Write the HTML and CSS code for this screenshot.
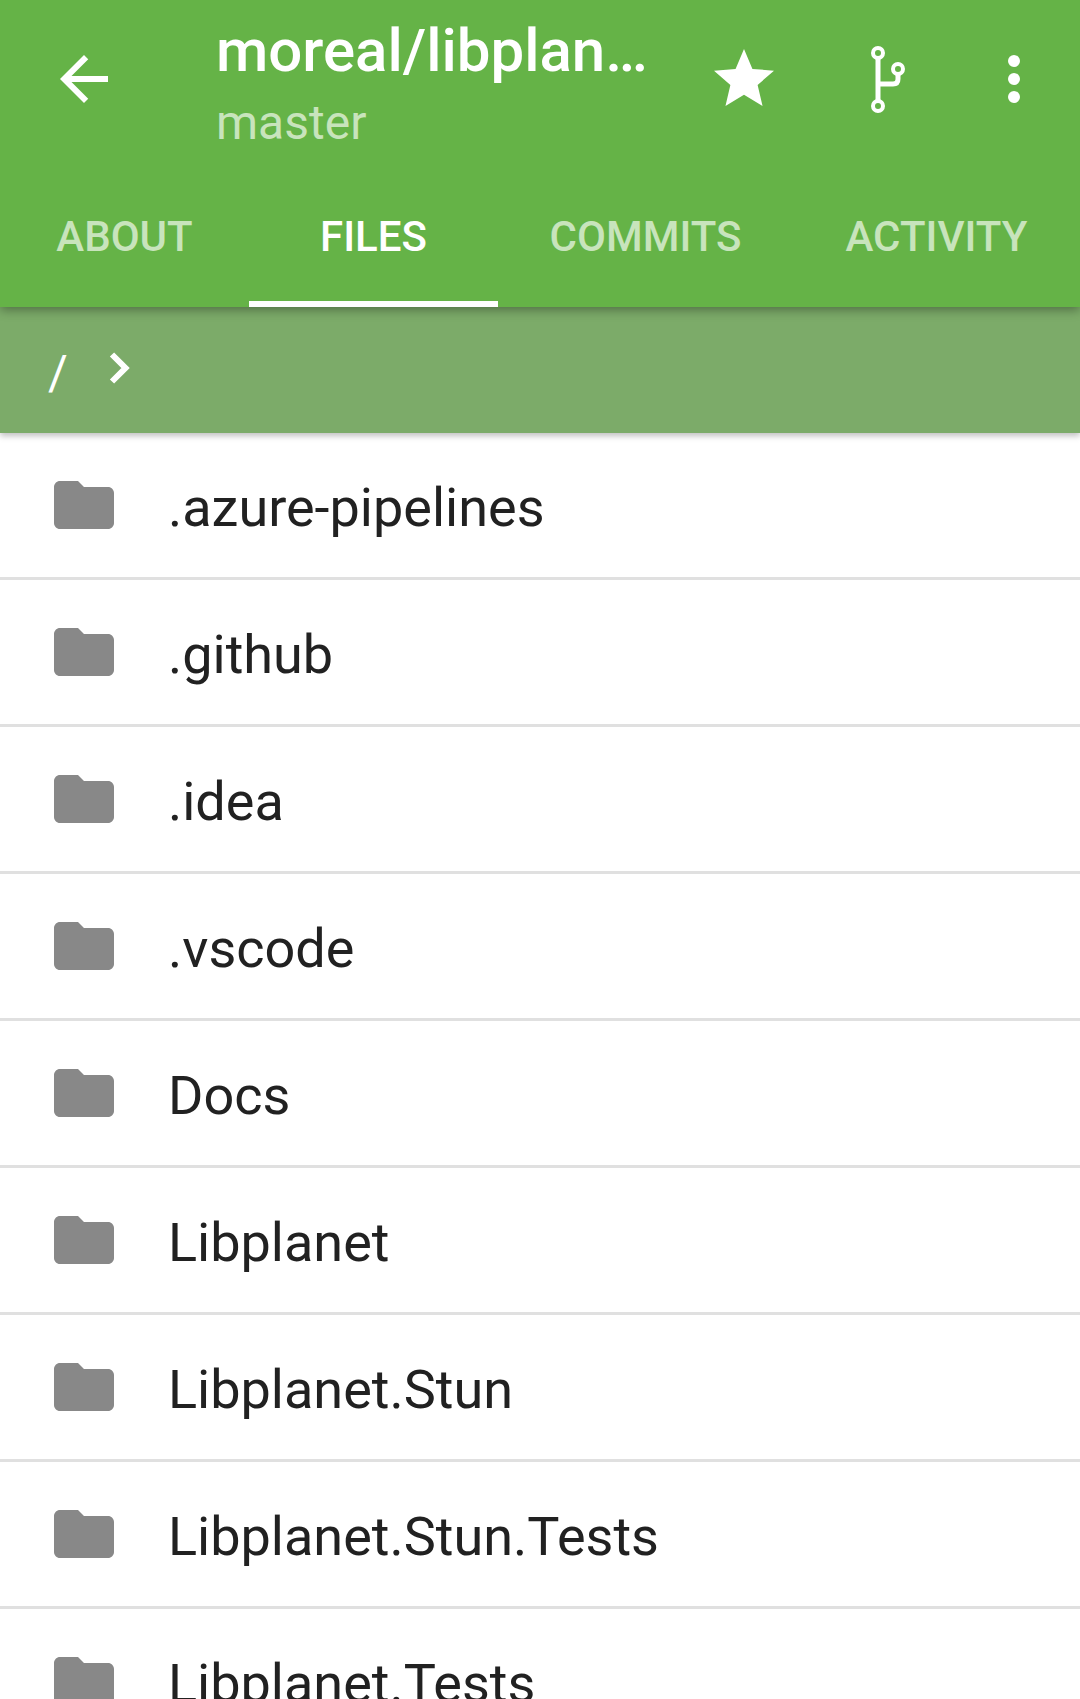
FILE: index.html
```html
<!DOCTYPE html>
<html lang="en">
<head>
<meta charset="utf-8">
<title>moreal/libplanet</title>
<link rel="stylesheet" href="styles.css">
</head>
<body>
<div class="app">
  <header class="appbar">
    <div class="toolbar">
      <svg class="icon back" viewBox="0 0 24 24"><path d="M20 11H7.83l5.59-5.59L12 4l-8 8 8 8 1.41-1.41L7.83 13H20v-2z"/></svg>
      <div class="titles">
        <div class="title">moreal/libplanet</div>
        <div class="subtitle">master</div>
      </div>
      <div class="actions">
        <svg class="icon star" viewBox="0 0 24 24"><path d="M12 17.27L18.18 21l-1.64-7.03L22 9.24l-7.19-.61L12 2 9.19 8.63 2 9.24l5.46 4.73L5.82 21z"/></svg>
        <svg class="icon branch" viewBox="0 0 72 72"><g fill="none" stroke="#fff" stroke-width="4"><circle cx="35" cy="10" r="5"/><circle cx="55" cy="26" r="5"/><circle cx="35" cy="63" r="5"/><path d="M35 15V58" stroke-width="5"/><path d="M35 41H50Q55 41 55 36V31" stroke-width="5"/></g></svg>
        <svg class="icon dots" viewBox="0 0 72 72"><circle cx="36" cy="18" r="6"/><circle cx="36" cy="36" r="6"/><circle cx="36" cy="54" r="6"/></svg>
      </div>
    </div>
    <nav class="tabs">
      <div class="tab">ABOUT</div>
      <div class="tab active">FILES</div>
      <div class="tab">COMMITS</div>
      <div class="tab">ACTIVITY</div>
    </nav>
  </header>
  <div class="crumbs">
    <span class="slash">/</span>
    <svg class="chev" viewBox="0 0 24 36"><path d="M5 2.500L18.500 16L5 29.500" fill="none" stroke="#fff" stroke-width="6"/></svg>
  </div>
  <ul class="files">
    <li class="file"><svg class="folder" viewBox="0 0 24 24"><path d="M10 4H4c-1.100 0-2 .9-2 2v12c0 1.100.9 2 2 2h16c1.100 0 2-.9 2-2V8c0-1.100-.9-2-2-2h-8l-2-2z"/></svg><span class="name">.azure-pipelines</span></li>
    <li class="file"><svg class="folder" viewBox="0 0 24 24"><path d="M10 4H4c-1.100 0-2 .9-2 2v12c0 1.100.9 2 2 2h16c1.100 0 2-.9 2-2V8c0-1.100-.9-2-2-2h-8l-2-2z"/></svg><span class="name">.github</span></li>
    <li class="file"><svg class="folder" viewBox="0 0 24 24"><path d="M10 4H4c-1.100 0-2 .9-2 2v12c0 1.100.9 2 2 2h16c1.100 0 2-.9 2-2V8c0-1.100-.9-2-2-2h-8l-2-2z"/></svg><span class="name">.idea</span></li>
    <li class="file"><svg class="folder" viewBox="0 0 24 24"><path d="M10 4H4c-1.100 0-2 .9-2 2v12c0 1.100.9 2 2 2h16c1.100 0 2-.9 2-2V8c0-1.100-.9-2-2-2h-8l-2-2z"/></svg><span class="name">.vscode</span></li>
    <li class="file"><svg class="folder" viewBox="0 0 24 24"><path d="M10 4H4c-1.100 0-2 .9-2 2v12c0 1.100.9 2 2 2h16c1.100 0 2-.9 2-2V8c0-1.100-.9-2-2-2h-8l-2-2z"/></svg><span class="name">Docs</span></li>
    <li class="file"><svg class="folder" viewBox="0 0 24 24"><path d="M10 4H4c-1.100 0-2 .9-2 2v12c0 1.100.9 2 2 2h16c1.100 0 2-.9 2-2V8c0-1.100-.9-2-2-2h-8l-2-2z"/></svg><span class="name">Libplanet</span></li>
    <li class="file"><svg class="folder" viewBox="0 0 24 24"><path d="M10 4H4c-1.100 0-2 .9-2 2v12c0 1.100.9 2 2 2h16c1.100 0 2-.9 2-2V8c0-1.100-.9-2-2-2h-8l-2-2z"/></svg><span class="name">Libplanet.Stun</span></li>
    <li class="file"><svg class="folder" viewBox="0 0 24 24"><path d="M10 4H4c-1.100 0-2 .9-2 2v12c0 1.100.9 2 2 2h16c1.100 0 2-.9 2-2V8c0-1.100-.9-2-2-2h-8l-2-2z"/></svg><span class="name">Libplanet.Stun.Tests</span></li>
    <li class="file"><svg class="folder" viewBox="0 0 24 24"><path d="M10 4H4c-1.100 0-2 .9-2 2v12c0 1.100.9 2 2 2h16c1.100 0 2-.9 2-2V8c0-1.100-.9-2-2-2h-8l-2-2z"/></svg><span class="name">Libplanet.Tests</span></li>
  </ul>
</div>
</body>
</html>
```

FILE: styles.css
```css
* { box-sizing: border-box; }
html, body { margin: 0; padding: 0; }
body { background: #fff; font-family: Roboto, "Liberation Sans", sans-serif; color: #212121; }
.app { width: 1080px; height: 1699px; overflow: hidden; display: flex; flex-direction: column; }
.appbar { position: relative; z-index: 2; background: #65b347; height: 307px; box-shadow: 0 3px 10px rgba(0,0,0,.35); flex: none; }
.toolbar { display: flex; align-items: flex-start; height: 189px; padding: 43px 30px 0 48px; }
.icon { fill: #fff; flex: none; display: block; }
.back { width: 72px; height: 72px; }
.titles { flex: 1; min-width: 0; margin-left: 96px; margin-top: -28px; margin-right: 59px; }
.title { font-size: 60px; font-weight: 500; color: #fff; line-height: 72px; white-space: nowrap; overflow: hidden; text-overflow: ellipsis; }
.subtitle { font-size: 48px; color: #c8e4bc; line-height: 52px; margin-top: 10px; }
.actions { display: flex; gap: 63px; align-items: flex-start; flex: none; }
.star { width: 72px; height: 72px; }
.branch { width: 72px; height: 72px; }
.dots { width: 72px; height: 72px; }
.tabs { display: grid; grid-template-columns: 249px 249px 295px 287px; height: 118px; }
.tab { display: flex; align-items: center; justify-content: center; height: 118px; padding-bottom: 18px; font-size: 42px; font-weight: 500; color: #c8e4bc; border-bottom: 6px solid transparent; }
.tab.active { color: #fff; border-bottom-color: #fff; }
.crumbs { position: relative; z-index: 1; flex: none; height: 126px; background: #7cab69; box-shadow: 0 3px 6px rgba(0,0,0,.25); display: flex; align-items: flex-start; padding: 38px 0 0 48px; }
.slash { color: #fff; font-size: 48px; line-height: 56px; }
.chev { width: 24px; height: 36px; margin-left: 39px; margin-top: 7px; }
.files { list-style: none; margin: 0; padding: 0; }
.file { height: 147px; border-bottom: 3px solid #e0e0e0; display: flex; align-items: center; padding-left: 48px; font-size: 54px; }
.folder { width: 72px; height: 72px; fill: #888; flex: none; margin-right: 49px; }
.name { margin-top: 4px; margin-left: -1px; }
```
